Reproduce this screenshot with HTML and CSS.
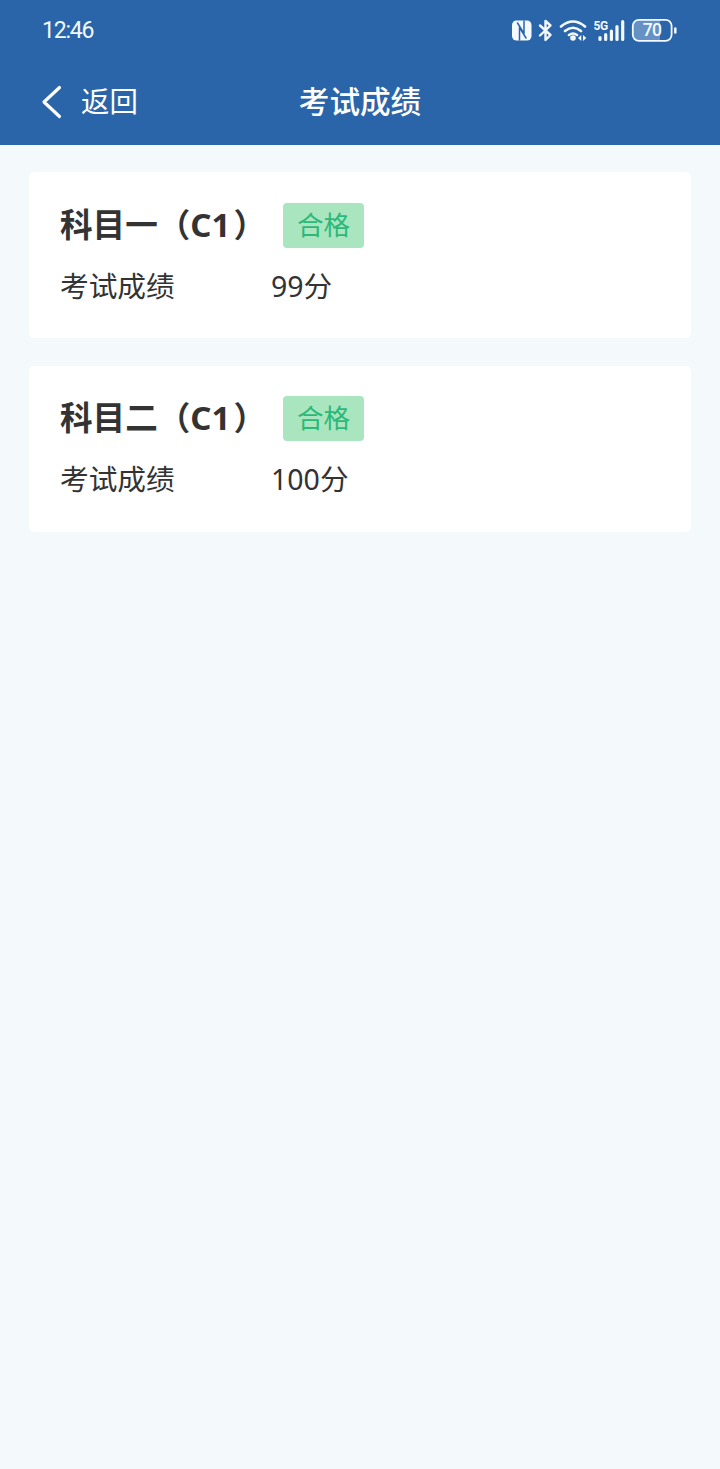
FILE: index.html
```html
<!DOCTYPE html>
<html lang="zh-CN">
<head>
    <meta charset="UTF-8">
    <meta name="viewport" content="width=device-width, initial-scale=1.0">
    <title>考试成绩</title>
    <link rel="stylesheet" href="styles.css">
</head>
<body>
    <header class="header">
        <div class="status-bar">
            <span class="time">12:46</span>
            <svg class="status-icons" width="166" height="28" viewBox="511 16 166 28" fill="none" stroke="#f3f9ff" stroke-linecap="round" stroke-linejoin="round">
                <!-- nfc -->
                <rect x="512" y="20.5" width="19.5" height="20" rx="4.5" fill="#f3f9ff" stroke="none"/>
                <path d="M519.500 40V27.500l6.500 10.500M524 21v12.500L517.500 23" stroke="#2b65a9" stroke-width="1.500"/>
                <!-- bluetooth -->
                <path d="M540 25.500l10.500 9.500-5 5V21l5 4.500L540 35.500" stroke-width="2.400"/>
                <!-- wifi -->
                <path d="M561 26.500q12-10 24 0M565 31q8-6.500 16 0M569 35q4-3 8 0" stroke-width="2.600"/>
                <circle cx="573" cy="38" r="2.800" fill="#f3f9ff" stroke="none"/>
                <path d="M581.300 35v6l-3.300-3zM583 35v6l3.300-3z" fill="#f3f9ff" stroke="none"/>
                <!-- signal -->
                <path d="M600 37.500v2M605.700 34.500v5M611.400 31v8.500M617 26.500v13M622.700 21.500v18" stroke-width="3.200"/>
                <text class="network" x="593.500" y="30.300">5G</text>
                <!-- battery -->
                <path d="M638 20h22v21h-22q-5 0-5-5V25q0-5 5-5z" fill="#6591c5" stroke="none"/>
                <rect x="632.800" y="19.800" width="38.800" height="21" rx="6" stroke-width="1.800"/>
                <path d="M675.300 28.500v4" stroke-width="2.500"/>
                <text class="battery" x="652" y="35.700" text-anchor="middle">70</text>
            </svg>
        </div>
        <nav class="nav-bar">
            <a class="back">
                <svg class="back-icon" width="22" height="34" viewBox="0 0 22 34" fill="none" stroke="#fff" stroke-width="3.200" stroke-linecap="round" stroke-linejoin="round">
                    <path d="M18.500 2.500L3 17l15.500 14.500"/>
                </svg>
                <span>返回</span>
            </a>
            <h1 class="title">考试成绩</h1>
        </nav>
    </header>

    <main class="list">
        <section class="card">
            <div class="card-head">
                <h2 class="subject">科目一（<span class="type">C1</span>）</h2>
                <span class="badge">合格</span>
            </div>
            <div class="row">
                <span class="label">考试成绩</span>
                <span class="score"><span class="num">99</span>分</span>
            </div>
        </section>
        <section class="card">
            <div class="card-head">
                <h2 class="subject">科目二（<span class="type">C1</span>）</h2>
                <span class="badge">合格</span>
            </div>
            <div class="row">
                <span class="label">考试成绩</span>
                <span class="score"><span class="num">100</span>分</span>
            </div>
        </section>
    </main>
</body>
</html>
```
FILE: styles.css
```css
* {
    box-sizing: border-box;
}
body {
    margin: 0;
    min-height: 100vh;
    background: #f4f9fb;
    color: #333;
    font-family: "Noto Sans CJK SC", sans-serif;
}
.header {
    height: 145px;
    background: #2b65a9;
    color: #fff;
}
.status-bar {
    display: flex;
    justify-content: space-between;
    align-items: center;
    height: 60px;
    padding: 0 43px 0 42px;
}
.time {
    font-family: Roboto, sans-serif;
    font-size: 23px;
    letter-spacing: -1.2px;
    color: #f3f9ff;
}
.status-icons text {
    fill: #f3f9ff;
    stroke: none;
    font-family: Roboto, sans-serif;
}
.network {
    font-size: 12px;
    font-weight: 700;
    letter-spacing: -0.3px;
}
.battery {
    font-size: 17.5px;
    font-weight: 500;
    letter-spacing: -0.6px;
}
.nav-bar {
    display: grid;
    grid-template-columns: 1fr auto 1fr;
    align-items: center;
    height: 79px;
    padding: 0 41px;
}
.back {
    display: flex;
    align-items: center;
    gap: 18px;
    font-size: 28.4px;
    line-height: 40px;
}
.back-icon {
    margin-top: 4px;
}
.title {
    margin: 0;
    font-size: 30.6px;
    font-weight: 500;
    line-height: 40px;
}
.list {
    display: flex;
    flex-direction: column;
    gap: 27.5px;
    padding: 27px 29px;
}
.card {
    height: 166px;
    padding: 30.6px 31px;
    background: #fff;
    border-radius: 5px;
}
.card-head {
    display: flex;
    gap: 28px;
    height: 45px;
}
.subject {
    width: 195px;
    margin: 0;
    font-size: 32.6px;
    font-weight: 700;
    line-height: 39px;
    white-space: nowrap;
}
.type {
    padding-right: 3px;
    font-family: "Noto Sans", sans-serif;
    font-size: 33px;
    line-height: 1;
}
.badge {
    width: 81px;
    height: 45px;
    border-radius: 4px;
    background: #a9e6bf;
    color: #2cb879;
    font-size: 26.6px;
    line-height: 41px;
    text-align: center;
}
.row {
    display: flex;
    height: 40px;
    margin-top: 17px;
    font-size: 28.7px;
    line-height: 40px;
}
.label {
    width: 211px;
}
.num {
    font-family: "Noto Sans", sans-serif;
    font-size: 28.5px;
    line-height: 1;
}
```
